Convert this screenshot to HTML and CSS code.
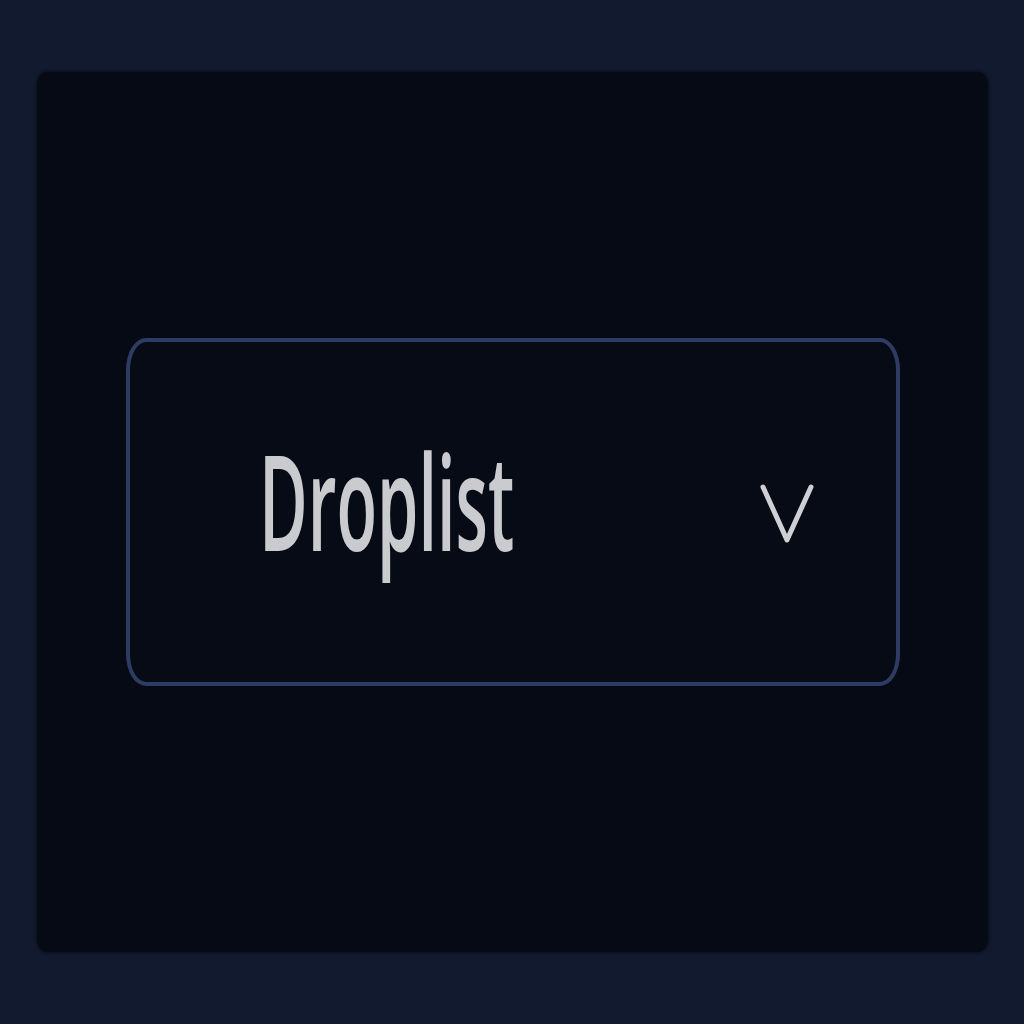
FILE: index.html
```html
<!DOCTYPE html>
<html>
<head>
<meta charset="utf-8">
<link rel="stylesheet" href="styles.css">
</head>
<body>
<div class="page">
  <div class="panel">
    <div class="droplist">
      <span class="label">Droplist</span>
      <svg class="chevron" width="54" height="60" viewBox="0 0 54 60">
        <polyline points="3,3 27,56 51,3" fill="none" stroke="#cfd0d4" stroke-width="5" stroke-linecap="round" stroke-linejoin="round"/>
      </svg>
    </div>
  </div>
</div>
</body>
</html>
```
FILE: styles.css
```css
html, body {
  margin: 0;
  padding: 0;
  background: #111a2e;
}
.page {
  width: 1024px;
  height: 1024px;
  box-sizing: border-box;
  padding: 72px 36px 72px 37px;
  display: flex;
}
.panel {
  flex: 1;
  background: #060a14;
  border-radius: 10px / 14px;
  box-shadow: 0 0 3px 1px #0a0f1c;
  display: flex;
  align-items: center;
  justify-content: center;
}
.droplist {
  width: 774px;
  height: 348px;
  box-sizing: border-box;
  border: 4px solid #2d3c62;
  border-radius: 20px / 32px;
  background: #070b16;
  display: flex;
  align-items: center;
  padding-left: 129px;
  padding-right: 82px;
}
.label {
  flex: 1;
  min-width: 0;
  font-family: "Open Sans", sans-serif;
  font-weight: 600;
  font-size: 133px;
  line-height: 1;
  color: #cacbcf;
  display: inline-block;
  transform: scaleX(0.5);
  transform-origin: left center;
  margin-top: -26px;
  white-space: nowrap;
}
.chevron {
  flex: none;
  margin-top: 4px;
}
```
